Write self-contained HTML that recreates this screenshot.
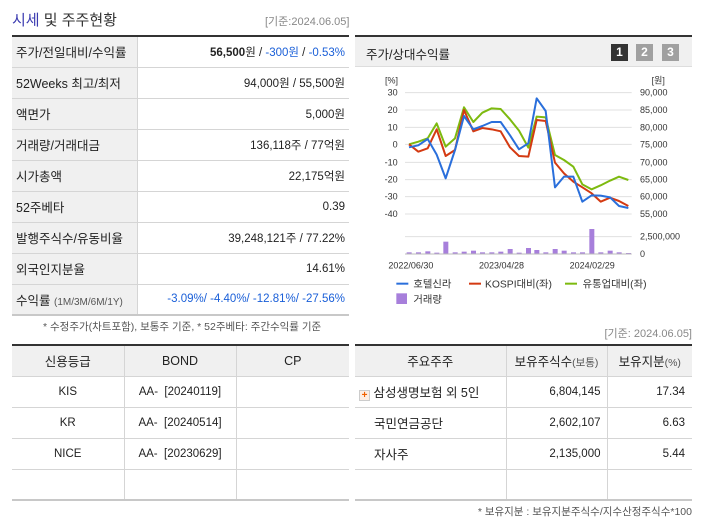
<!DOCTYPE html>
<html><head><meta charset="utf-8"><style>
*{margin:0;padding:0;box-sizing:border-box}
body{width:702px;height:525px;background:#fff;font-family:"Liberation Sans","Noto Sans CJK KR",sans-serif;font-size:12px;color:#222;position:relative;overflow:hidden}
.abs{position:absolute}
table{border-collapse:collapse;position:absolute;table-layout:fixed}
td{height:31px;border-bottom:1px solid #d5d5d5;font-size:11.5px;white-space:nowrap}
.t1{left:12px;top:35px;width:337px;border-top:2px solid #333;border-bottom:2px solid #c8c8c8}
.t1 td.l{background:#f0f0f0;border-right:1px solid #d5d5d5;padding-left:4px;width:125px;font-size:12.5px}
.t1 td.r{text-align:right;padding-right:4px}
.blue{color:#1a5fd8}
.t2{top:344px;border-top:2px solid #333;border-bottom:2px solid #c8c8c8}
.t2 td{border-right:1px solid #d5d5d5;text-align:center}
.t2 td:last-child{border-right:none}
.t2 tr.h td{background:#f0f0f0;font-size:12.5px}
</style></head><body>
<div class="abs" style="left:12px;top:9px;font-size:15px;color:#333"><span style="color:#3a3ab0">시세</span> 및 주주현황</div>
<div class="abs" style="left:265px;top:13px;font-size:11px;color:#888">[기준:2024.06.05]</div>

<table class="t1">
<tr><td class="l">주가/전일대비/수익률</td><td class="r"><b>56,500</b>원 / <span class="blue">-300원</span> / <span class="blue">-0.53%</span></td></tr>
<tr><td class="l">52Weeks 최고/최저</td><td class="r">94,000원 / 55,500원</td></tr>
<tr><td class="l">액면가</td><td class="r">5,000원</td></tr>
<tr><td class="l">거래량/거래대금</td><td class="r">136,118주 / 77억원</td></tr>
<tr><td class="l">시가총액</td><td class="r">22,175억원</td></tr>
<tr><td class="l">52주베타</td><td class="r">0.39</td></tr>
<tr><td class="l">발행주식수/유동비율</td><td class="r">39,248,121주 / 77.22%</td></tr>
<tr><td class="l">외국인지분율</td><td class="r">14.61%</td></tr>
<tr><td class="l">수익률 <span style="font-size:10px;color:#555">(1M/3M/6M/1Y)</span></td><td class="r blue">-3.09%/ -4.40%/ -12.81%/ -27.56%</td></tr>
</table>
<div class="abs" style="left:43px;top:319px;font-size:10.5px;color:#555">* 수정주가(차트포함), 보통주 기준, * 52주베타: 주간수익률 기준</div>

<div class="abs" style="left:355px;top:35px;width:337px;height:32px;background:#f0f0f0;border-top:2px solid #333;border-bottom:1px solid #ddd"></div>
<div class="abs" style="left:366px;top:44px;font-size:12.5px">주가/상대수익률</div>
<div class="abs" style="left:611px;top:44px;width:17px;height:17px;background:#333;color:#fff;font-weight:bold;text-align:center;line-height:17px;font-size:12px">1</div>
<div class="abs" style="left:636px;top:44px;width:17px;height:17px;background:#a0a0a0;color:#fff;font-weight:bold;text-align:center;line-height:17px;font-size:12px">2</div>
<div class="abs" style="left:662px;top:44px;width:17px;height:17px;background:#a0a0a0;color:#fff;font-weight:bold;text-align:center;line-height:17px;font-size:12px">3</div>

<svg class="abs" style="left:355px;top:30px" width="347" height="280" viewBox="0 0 1041 840">
<g stroke="#e0e0e0" stroke-width="3">
<line x1="150" y1="188" x2="830" y2="188"/><line x1="150" y1="240" x2="830" y2="240"/><line x1="150" y1="292" x2="830" y2="292"/><line x1="150" y1="343" x2="830" y2="343"/><line x1="150" y1="397" x2="830" y2="397"/><line x1="150" y1="449" x2="830" y2="449"/><line x1="150" y1="500" x2="830" y2="500"/><line x1="150" y1="552" x2="830" y2="552"/><line x1="150" y1="620" x2="830" y2="620"/><line x1="150" y1="672" x2="830" y2="672"/>
</g>
<g font-size="27" fill="#333" font-family="Liberation Sans,sans-serif">
<text x="90" y="160">[%]</text><text x="890" y="160">[원]</text>
<g text-anchor="end"><text x="128" y="197">30</text><text x="128" y="249">20</text><text x="128" y="301">10</text><text x="128" y="352">0</text><text x="128" y="406">-10</text><text x="128" y="458">-20</text><text x="128" y="509">-30</text><text x="128" y="561">-40</text></g>
<text x="855" y="197">90,000</text><text x="855" y="249">85,000</text><text x="855" y="301">80,000</text><text x="855" y="352">75,000</text><text x="855" y="406">70,000</text><text x="855" y="458">65,000</text><text x="855" y="509">60,000</text><text x="855" y="561">55,000</text>
<text x="855" y="629">2,500,000</text><text x="855" y="681">0</text>
<text x="100" y="715">2022/06/30</text><text x="372" y="715">2023/04/28</text><text x="644" y="715">2024/02/29</text>
</g>
<g fill="#a77fdb">
<rect x="155" y="667" width="15" height="5"/><rect x="183" y="667" width="15" height="5"/><rect x="211" y="664" width="15" height="8"/><rect x="238" y="668" width="15" height="4"/><rect x="265" y="635" width="15" height="37"/><rect x="293" y="667" width="15" height="5"/><rect x="320" y="665" width="15" height="7"/><rect x="348" y="662" width="15" height="10"/><rect x="375" y="667" width="15" height="5"/><rect x="403" y="667" width="15" height="5"/><rect x="430" y="665" width="15" height="7"/><rect x="458" y="657" width="15" height="15"/><rect x="485" y="668" width="15" height="4"/><rect x="513" y="654" width="15" height="18"/><rect x="538" y="660" width="15" height="12"/><rect x="565" y="667" width="15" height="5"/><rect x="593" y="657" width="15" height="15"/><rect x="620" y="662" width="15" height="10"/><rect x="648" y="667" width="15" height="5"/><rect x="675" y="667" width="15" height="5"/><rect x="703" y="597" width="15" height="75"/><rect x="730" y="667" width="15" height="5"/><rect x="758" y="662" width="15" height="10"/><rect x="785" y="667" width="15" height="5"/><rect x="813" y="669" width="15" height="3"/>
</g>
<line x1="150" y1="672" x2="830" y2="672" stroke="#bbb" stroke-width="3"/>
<g fill="none" stroke-width="6" stroke-linejoin="round">
<polyline stroke="#7dba0f" points="162,343 190,335 218,325 245,280 272,350 300,325 327,232 355,276 382,248 410,235 437,237 465,268 492,302 520,353 545,260 572,262 600,375 627,390 655,410 682,463 710,478 737,466 765,452 792,440 820,450"/>
<polyline stroke="#d43a12" points="162,343 190,365 218,355 245,298 272,378 300,360 327,240 355,304 382,294 410,298 437,304 465,352 492,378 520,380 545,270 572,273 600,398 627,430 655,455 682,472 710,490 737,515 765,503 792,513 820,528"/>
<polyline stroke="#2a6fdb" points="162,352 190,346 218,327 245,374 272,445 300,360 327,258 355,298 382,288 410,276 437,276 465,316 492,358 520,340 545,205 572,243 600,472 627,440 655,440 682,515 710,496 737,497 765,502 792,528 820,534"/>
</g>
<g font-size="31" fill="#333" font-family="Liberation Sans,Noto Sans CJK KR,sans-serif">
<rect x="124" y="758" width="36" height="6" fill="#2a6fdb"/><text x="175" y="773">호텔신라</text>
<rect x="342" y="758" width="36" height="6" fill="#d43a12"/><text x="390" y="773">KOSPI대비(좌)</text>
<rect x="630" y="758" width="36" height="6" fill="#7dba0f"/><text x="683" y="773">유통업대비(좌)</text>
<rect x="124" y="790" width="32" height="32" fill="#a77fdb"/><text x="175" y="819">거래량</text>
</g>
</svg>

<div class="abs" style="right:10px;top:325px;font-size:11px;color:#888">[기준: 2024.06.05]</div>

<table class="t2" style="left:12px;width:337px">
<tr class="h"><td style="width:112px">신용등급</td><td style="width:112px">BOND</td><td>CP</td></tr>
<tr><td>KIS</td><td>AA-&nbsp;&nbsp;[20240119]</td><td></td></tr>
<tr><td>KR</td><td>AA-&nbsp;&nbsp;[20240514]</td><td></td></tr>
<tr><td>NICE</td><td>AA-&nbsp;&nbsp;[20230629]</td><td></td></tr>
<tr><td></td><td></td><td></td></tr>
</table>

<table class="t2" style="left:355px;width:337px">
<tr class="h"><td style="width:151px">주요주주</td><td style="width:101px">보유주식수<span style="font-size:10.5px;color:#555">(보통)</span></td><td>보유지분<span style="font-size:10.5px;color:#555">(%)</span></td></tr>
<tr><td style="text-align:left;padding-left:4px;font-size:12.5px"><span style="display:inline-block;width:11px;height:11px;border:1px solid #ccc;background:#fdeee5;color:#f06000;font-size:10px;line-height:9px;text-align:center;vertical-align:-1px;font-weight:bold">+</span> 삼성생명보험 외 5인</td><td style="text-align:right;padding-right:6px">6,804,145</td><td style="text-align:right;padding-right:7px">17.34</td></tr>
<tr><td style="text-align:left;padding-left:19px;font-size:12.5px">국민연금공단</td><td style="text-align:right;padding-right:6px">2,602,107</td><td style="text-align:right;padding-right:7px">6.63</td></tr>
<tr><td style="text-align:left;padding-left:19px;font-size:12.5px">자사주</td><td style="text-align:right;padding-right:6px">2,135,000</td><td style="text-align:right;padding-right:7px">5.44</td></tr>
<tr><td></td><td></td><td></td></tr>
</table>
<div class="abs" style="right:10px;top:504px;font-size:10.5px;color:#555">* 보유지분 : 보유지분주식수/지수산정주식수*100</div>
</body></html>
